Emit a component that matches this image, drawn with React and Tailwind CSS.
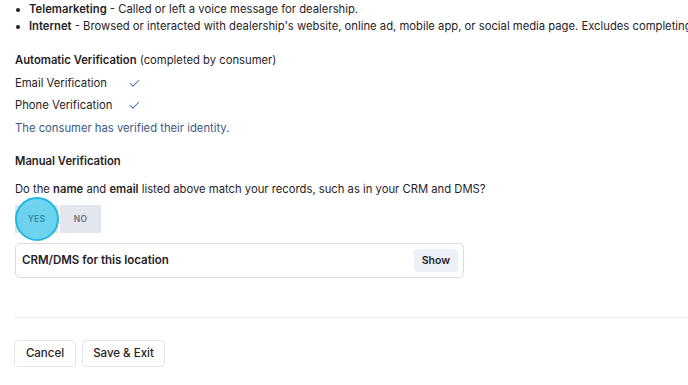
import { Check } from "lucide-react";

function VerifyRow({ label }) {
  return (
    <div className="flex items-center h-[22px]">
      <span className="w-[113px]">{label}</span>
      <Check size={13} strokeWidth={1.9} className="text-[#3b6db3]" />
    </div>
  );
}

function Bullet({ children }) {
  return (
    <li className="flex items-center h-[17px]">
      <span className="w-[4px] h-[4px] rounded-full bg-[#1f2328] mr-[9px] shrink-0" />
      <span>{children}</span>
    </li>
  );
}

export default function App() {
  return (
    <div
      className="w-[688px] h-[385px] overflow-hidden bg-white text-[11.25px] text-[#1f2328]"
      style={{ fontFamily: "Inter, 'Noto Sans', sans-serif" }}
    >
      <ul className="pl-[16px] pt-[1px] whitespace-nowrap">
        <Bullet>
          <b className="font-semibold">Telemarketing</b> - Called or left a voice message for dealership.
        </Bullet>
        <Bullet>
          <b className="font-semibold">Internet</b> - Browsed or interacted with dealership's website, online ad, mobile app, or social media page. Excludes completing
        </Bullet>
      </ul>

      <div className="px-[15px]">
        <div className="mt-[17px] leading-[17px]">
          <span className="font-semibold">Automatic Verification</span> (completed by consumer)
        </div>
        <div className="mt-[3px]">
          <VerifyRow label="Email Verification" />
          <VerifyRow label="Phone Verification" />
        </div>
        <div className="mt-[1px] leading-[22px] text-[#3c5a86]">The consumer has verified their identity.</div>

        <div className="mt-[11px] leading-[22px] font-semibold">Manual Verification</div>
        <div className="mt-[6px] leading-[22px]">
          Do the <b className="font-semibold">name</b> and <b className="font-semibold">email</b> listed above match your records, such as in your CRM and DMS?
        </div>

        <div className="mt-[5px] flex items-center gap-[2px] text-[8.5px] font-semibold tracking-wide">
          <div className="relative w-[43px] h-[28px] flex items-center justify-center bg-[#dfe3ec] text-[#2a8aa6]">
            <div className="absolute left-[0px] top-[-8px] w-[44px] h-[44px] rounded-full bg-[#5fcfee]/90 border-2 border-[#1fb8e0]" />
            <span className="relative">YES</span>
          </div>
          <div className="w-[41px] h-[28px] flex items-center justify-center bg-[#e3e6ee] text-[#6b7280]">NO</div>
        </div>

        <div className="mt-[10px] w-[449px] h-[35px] border border-[#d9dce2] rounded-[5px] flex items-center justify-between pl-[6px] pr-[5px]">
          <span className="font-semibold text-[11.5px]">CRM/DMS for this location</span>
          <button className="h-[23px] px-[8px] rounded-[4px] bg-[#edf0f6] text-[10.5px] font-semibold text-[#1f2328]">Show</button>
        </div>
      </div>

      <div className="mt-[39px] ml-[14px] border-t border-[#eceef1]" />

      <div className="mt-[22px] ml-[14px] flex gap-[6px]">
        <button className="h-[27px] w-[62px] rounded-[4px] border border-[#e2e4e8] font-medium text-[11.5px]">Cancel</button>
        <button className="h-[27px] w-[83px] rounded-[4px] border border-[#e2e4e8] font-medium text-[11.5px]">Save &amp; Exit</button>
      </div>
    </div>
  );
}
